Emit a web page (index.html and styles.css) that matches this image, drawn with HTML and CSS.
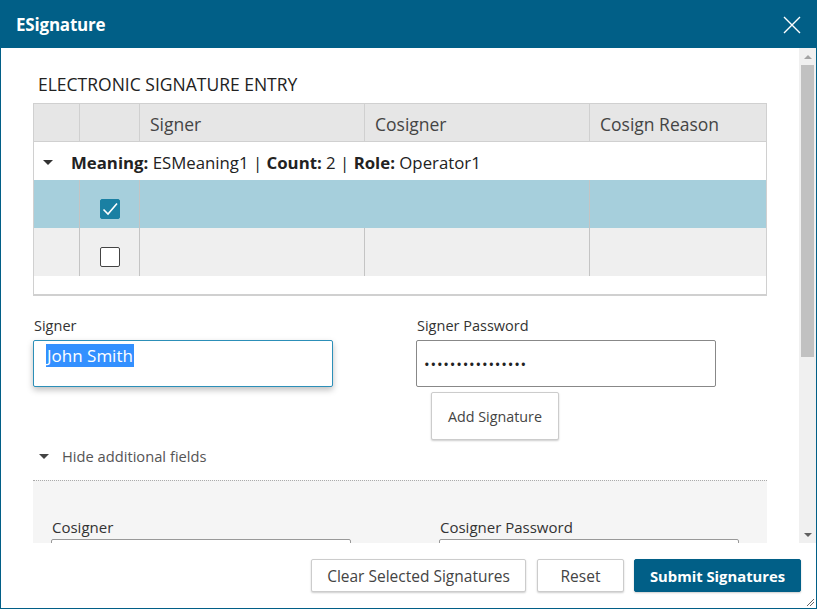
FILE: index.html
```html
<!DOCTYPE html>
<html>
<head>
<meta charset="utf-8">
<link rel="stylesheet" href="styles.css">
</head>
<body>
<div class="dialog">
  <div class="header">
    <span class="title">ESignature</span>
    <svg class="close" width="18" height="18" viewBox="0 0 18 18"><path d="M1 1 L17 17 M17 1 L1 17" stroke="#fff" stroke-width="1.4" fill="none"/></svg>
  </div>
  <div class="main">
    <div class="content">
      <h2 class="section-title">ELECTRONIC SIGNATURE ENTRY</h2>
      <div class="grid">
        <div class="row head">
          <div class="c c1"></div><div class="c c2"></div>
          <div class="c c3">Signer</div><div class="c c4">Cosigner</div><div class="c c5">Cosign Reason</div>
        </div>
        <div class="group">
          <span class="tri"></span>
          <span><b>Meaning:</b> ESMeaning1 | <b>Count:</b> 2 | <b>Role:</b> Operator1</span>
        </div>
        <div class="row data selected">
          <div class="c c1"></div>
          <div class="c c2"><span class="cb checked"><svg width="20" height="20" viewBox="0 0 20 20"><path d="M3.5 10.5 L8 15 L17 4.5" stroke="#fff" stroke-width="1.6" fill="none"/></svg></span></div>
          <div class="c c3"></div><div class="c c4"></div><div class="c c5"></div>
        </div>
        <div class="row data alt">
          <div class="c c1"></div>
          <div class="c c2"><span class="cb"></span></div>
          <div class="c c3"></div><div class="c c4"></div><div class="c c5"></div>
        </div>
        <div class="grid-foot"></div>
      </div>

      <div class="fields">
        <div class="field">
          <label class="lbl">Signer</label>
          <div class="input focused"><span class="sel">John Smith</span></div>
        </div>
        <div class="field">
          <label class="lbl">Signer Password</label>
          <div class="input pw">••••••••••••••••</div>
          <button class="btn add">Add Signature</button>
        </div>
      </div>

      <div class="toggle"><span class="tri small"></span><span>Hide additional fields</span></div>

      <div class="extra">
        <div class="fields2">
          <div class="field">
            <label class="lbl">Cosigner</label>
            <div class="input"></div>
          </div>
          <div class="field">
            <label class="lbl">Cosigner Password</label>
            <div class="input"></div>
          </div>
        </div>
      </div>
    </div>
    <div class="scrollbar">
      <div class="arrow up"></div>
      <div class="thumb"></div>
      <div class="spacer"></div>
      <div class="arrow down"></div>
    </div>
  </div>
  <div class="footer">
    <button class="btn fbtn clear">Clear Selected Signatures</button>
    <button class="btn fbtn reset">Reset</button>
    <button class="btn fbtn primary">Submit Signatures</button>
    <svg class="grip" width="10" height="10" viewBox="0 0 10 10"><path d="M9 2 L2 9 M9 5 L5 9" stroke="#666" stroke-width="1"/></svg>
  </div>
</div>
</body>
</html>
```

FILE: styles.css
```css
* { box-sizing: border-box; }
html, body { margin: 0; padding: 0; background: #fff; }
body { font-family: "Open Sans", "Noto Sans", sans-serif; color: #333; }

.dialog {
  width: 817px;
  height: 609px;
  border: 1px solid #015f87;
  display: flex;
  flex-direction: column;
  position: relative;
  overflow: hidden;
}

.header {
  height: 47px;
  flex: none;
  background: #015f87;
  display: flex;
  align-items: center;
  justify-content: space-between;
  padding: 0 15px 0 15px;
}
.title { color: #fff; font-weight: 700; font-size: 17px; letter-spacing: -0.2px; }
.close { display: block; margin-top: 1px; }

.main {
  height: 495px;
  flex: none;
  display: flex;
}
.content {
  flex: 1;
  overflow: hidden;
  padding: 24px 32px 0 32px;
}

.section-title {
  margin: 0 0 0 5px;
  font-size: 17.5px;
  font-weight: 400;
  line-height: 24px;
  color: #222;
}

.grid {
  margin-top: 7px;
  width: 734px;
  border: 1px solid #d0d0d0;
  border-bottom-width: 2px;
}
.row { display: flex; }
.c { flex: none; border-right: 1px solid #c4c4c4; }
.c1 { width: 46px; }
.c2 { width: 60px; display: flex; align-items: center; justify-content: center; }
.c3, .c4 { width: 225px; }
.c5 { flex: 1; border-right: none; }
.head { height: 38px; background: #e6e6e6; border-bottom: 1px solid #d0d0d0; }
.head .c { border-right-color: #d0d0d0; font-size: 17.5px; color: #444; line-height: 36px; padding: 2px 0 0 10px; }
.head .c1, .head .c2 { padding-left: 0; }

.group {
  height: 38px;
  padding-top: 3px;
  display: flex;
  align-items: center;
  font-size: 16.8px;
  color: #222;
}
.group b { font-weight: 700; }
.tri {
  width: 0; height: 0;
  border-left: 5px solid transparent;
  border-right: 5px solid transparent;
  border-top: 5px solid #333;
  margin: 0 18px 0 9px;
}
.data { height: 48px; }
.data .c2 { padding-top: 10px; }
.selected { background: #a6cfdc; }
.selected .c3 { border-right-color: transparent; }
.alt { background: #efefef; }
.cb {
  width: 20px; height: 20px;
  border: 1px solid #444;
  border-radius: 2px;
  background: #fff;
  display: block;
}
.cb.checked { background: #1a80a3; border-color: #1a80a3; position: relative; }
.cb.checked svg { position: absolute; left: -1px; top: -1px; }
.grid-foot { height: 18px; background: #fff; }

.fields {
  display: grid;
  grid-template-columns: 383px 300px;
  margin-top: 21px;
}
.field { display: flex; flex-direction: column; align-items: flex-start; }
.lbl { font-size: 14.5px; color: #333; line-height: 18px; margin: 0 0 5px 1px; }
.input {
  width: 300px;
  height: 47px;
  border: 1px solid #888;
  border-radius: 2px;
  background: #fff;
  font-size: 17px;
  padding: 4px 12px;
  line-height: 22px;
}
.input.focused { border-color: #2c8fb8; box-shadow: 0 3px 6px rgba(0,0,0,0.25); }
.sel { background: #3390ff; color: #fff; padding: 0 1px; }
.input.pw { font-size: 15px; letter-spacing: 0.8px; padding: 13px 7px; color: #222; line-height: 20px; }

.btn {
  font-family: inherit;
  background: #fff;
  border: 1px solid #ccc;
  border-radius: 2px;
  box-shadow: 0 1px 2px rgba(0,0,0,0.2);
  color: #444;
  cursor: pointer;
}
.add {
  margin: 5px 0 0 15px;
  width: 128px;
  height: 48px;
  font-size: 14.3px;
}

.toggle {
  margin-top: 6px;
  height: 20px;
  display: flex;
  align-items: center;
  font-size: 14.7px;
  color: #555;
}
.tri.small { margin: 0 13px 0 6px; border-top-color: #444; }

.extra {
  margin-top: 14px;
  width: 734px;
  border-top: 1px dotted #aaa;
  background: #f5f5f5;
  padding: 37px 18px 0 18px;
  height: 80px;
}
.fields2 { display: grid; grid-template-columns: 388px 300px; }
.fields2 .lbl { margin-bottom: 3px; font-size: 15px; }
.fields2 .input { border-color: #999; }

.scrollbar {
  width: 17px;
  flex: none;
  background: #f0f0f0;
  display: flex;
  flex-direction: column;
  align-items: center;
}
.arrow { width: 17px; height: 17px; display: flex; align-items: center; justify-content: center; flex: none; }
.arrow.up::before {
  content: ""; width: 0; height: 0;
  border-left: 4px solid transparent; border-right: 4px solid transparent;
  border-bottom: 4px solid #a3a3a3;
}
.arrow.down::before {
  content: ""; width: 0; height: 0;
  border-left: 4px solid transparent; border-right: 4px solid transparent;
  border-top: 4px solid #606060;
}
.thumb { width: 13px; height: 292px; background: #c1c1c1; flex: none; }
.spacer { flex: 1; }

.footer {
  height: 65px;
  flex: none;
  display: flex;
  justify-content: flex-end;
  align-items: flex-start;
  padding: 16px 15px 0 0;
  gap: 10px;
  position: relative;
}
.fbtn { height: 33px; font-size: 15.5px; }
.clear { width: 215px; margin-right: 1px; }
.reset { width: 87px; }
.primary { width: 167px; background: #015f87; border-color: #015f87; color: #fff; font-weight: 700; font-size: 14.8px; }
.grip { position: absolute; right: 1px; bottom: 1px; }
```
